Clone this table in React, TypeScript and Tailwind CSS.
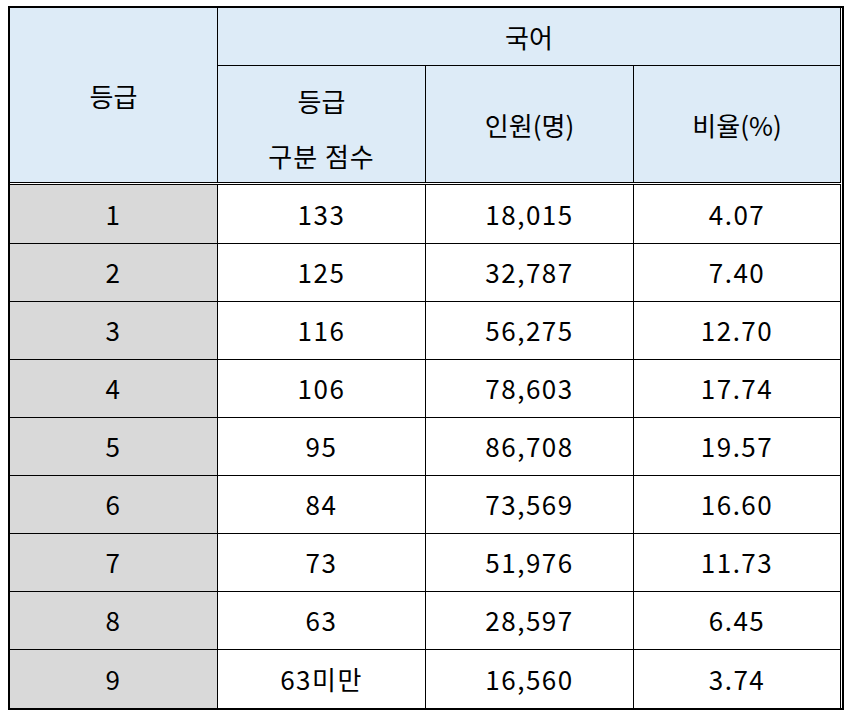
const rows = [
  ["1", "133", "18,015", "4.07"],
  ["2", "125", "32,787", "7.40"],
  ["3", "116", "56,275", "12.70"],
  ["4", "106", "78,603", "17.74"],
  ["5", "95", "86,708", "19.57"],
  ["6", "84", "73,569", "16.60"],
  ["7", "73", "51,976", "11.73"],
  ["8", "63", "28,597", "6.45"],
  ["9", "63미만", "16,560", "3.74"],
];

export default function App() {
  return (
    <div className="min-h-[713px] bg-white pl-2 pt-[6px] font-['Noto_Sans_CJK_KR','Noto_Sans',sans-serif] text-[26px] text-black">
      <div className="w-[836px] border-2 border-black bg-white pr-[1px]">
        <div className="w-[831px]">
          {/* header */}
          <div className="flex">
            <div className="flex h-[174px] w-[208px] items-center justify-center border-r border-black bg-[#ddebf7]">
              등급
            </div>
            <div className="flex w-[623px] flex-col">
              <div className="flex h-[58px] items-center justify-center border-b border-r border-black bg-[#ddebf7]">
                국어
              </div>
              <div className="flex h-[116px]">
                <div className="flex w-[208px] flex-col items-center justify-center border-r border-black bg-[#ddebf7] pt-2 leading-[55px]">
                  <span>등급</span>
                  <span className="tracking-[1px]">구분 점수</span>
                </div>
                <div className="flex w-[208px] items-center justify-center border-r border-black bg-[#ddebf7]">
                  인원(명)
                </div>
                <div className="flex w-[207px] items-center justify-center border-r border-black bg-[#ddebf7]">
                  비율(%)
                </div>
              </div>
            </div>
          </div>
          <div className="h-[3px] border-y border-black bg-white" />

          {/* body */}
          {rows.map((r, i) => (
            <div
              key={r[0]}
              className={
                i === 0
                  ? "flex h-[59px] border-b border-black tracking-[1.5px]"
                  : i === rows.length - 1
                    ? "flex h-[58px] tracking-[1.5px]"
                    : "flex h-[58px] border-b border-black tracking-[1.5px]"
              }
            >
              <div className="flex w-[208px] items-center justify-center border-r border-black bg-[#d9d9d9] pb-[2px]">
                {r[0]}
              </div>
              <div className="flex w-[208px] items-center justify-center border-r border-black pb-[2px]">
                {r[1]}
              </div>
              <div className="flex w-[208px] items-center justify-center border-r border-black pb-[2px]">
                {r[2]}
              </div>
              <div className="flex w-[207px] items-center justify-center border-r border-black pb-[2px]">
                {r[3]}
              </div>
            </div>
          ))}
        </div>
      </div>
    </div>
  );
}
